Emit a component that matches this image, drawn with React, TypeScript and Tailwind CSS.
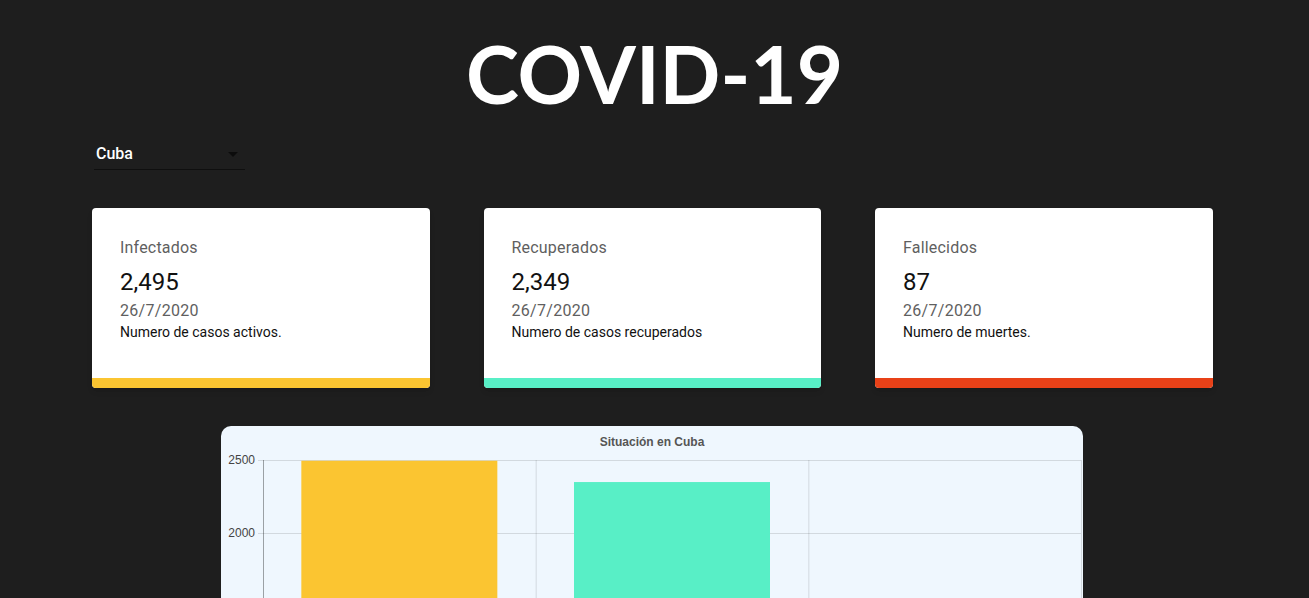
const stats = [
  { title: "Infectados", value: "2,495", date: "26/7/2020", desc: "Numero de casos activos.", bar: "bg-[#fbc531]" },
  { title: "Recuperados", value: "2,349", date: "26/7/2020", desc: "Numero de casos recuperados", bar: "bg-[#58efc6]" },
  { title: "Fallecidos", value: "87", date: "26/7/2020", desc: "Numero de muertes.", bar: "bg-[#e84118]" },
];

const StatCard = ({ title, value, date, desc, bar }: (typeof stats)[number]) => (
  <div className="w-[337.5px] h-[180px] bg-white rounded-[4px] overflow-hidden flex flex-col shadow-md">
    <div className="flex-1 pl-[28px] pt-[29px] font-['Roboto',sans-serif]">
      <div className="text-[16px] leading-[22px] text-[#5f5f5f] tracking-[0.2px]">{title}</div>
      <div className="text-[24px] leading-[32px] text-[#111] mt-[7px]">{value}</div>
      <div className="text-[16px] leading-[23px] text-[#5f5f5f] tracking-[0.3px] mt-[1px]">{date}</div>
      <div className="text-[14px] leading-[20px] text-[#111]">{desc}</div>
    </div>
    <div className={`h-[10px] ${bar}`} />
  </div>
);

const Chart = () => {
  const top = 34;
  const left = 42;
  const right = 860;
  const unit = 73 / 500;
  const ticks = [2500, 2000, 1500, 1000, 500, 0];
  const catW = (right - left) / 3;
  const bars = [
    { v: 2495, c: "#fbc531" },
    { v: 2349, c: "#58efc6" },
    { v: 87, c: "#e84118" },
  ];
  const y0 = top + 2500 * unit;
  return (
    <svg width="862" height="440" className="block">
      <text x="431" y="20" textAnchor="middle" fontFamily="Liberation Sans, Arial, sans-serif" fontSize="12" fontWeight="bold" fill="#555">
        Situación en Cuba
      </text>
      {ticks.map((t) => {
        const y = top + (2500 - t) * unit;
        return (
          <g key={t}>
            <line x1={left - 5} x2={right} y1={y + 0.5} y2={y + 0.5} stroke="rgba(0,0,0,0.12)" />
            <text x={left - 8} y={y + 4} textAnchor="end" fontFamily="Liberation Sans, Arial, sans-serif" fontSize="12" fill="#444">
              {t}
            </text>
          </g>
        );
      })}
      {[0, 1, 2, 3].map((i) => (
        <line key={i} x1={left + i * catW + 0.5} x2={left + i * catW + 0.5} y1={top} y2={y0 + 5} stroke={i === 0 ? "rgba(0,0,0,0.35)" : "rgba(0,0,0,0.12)"} />
      ))}
      {bars.map((b, i) => {
        const h = b.v * unit;
        const cx = left + i * catW + catW / 2;
        return <rect key={i} x={cx - 98} y={y0 - h} width={196} height={h} fill={b.c} />;
      })}
    </svg>
  );
};

export default function App() {
  return (
    <div className="min-h-screen bg-[#1e1e1e] pb-10">
      <h1 className="text-center text-white font-['Lato',sans-serif] font-bold text-[80px] leading-[104px] pt-[21px]">
        COVID-19
      </h1>

      <div className="pl-[94px] mt-[13px]">
        <div className="w-[151px] h-[32px] border-b border-[#0f0f0f] flex items-center justify-between">
          <span className="text-white text-[16px] font-medium font-['Roboto',sans-serif] pl-[2px]">Cuba</span>
          <svg width="10" height="5" className="mr-[7px] mt-[1px]">
            <path d="M0 0 L10 0 L5 5 Z" fill="#0c0c0c" />
          </svg>
        </div>
      </div>

      <div className="flex gap-[54px] pl-[92px] mt-[38px]">
        {stats.map((s) => (
          <StatCard key={s.title} {...s} />
        ))}
      </div>

      <div className="w-[862px] mx-auto mt-[38px] bg-[#eff7fe] rounded-t-[10px] translate-x-[-3px]">
        <Chart />
      </div>
    </div>
  );
}
